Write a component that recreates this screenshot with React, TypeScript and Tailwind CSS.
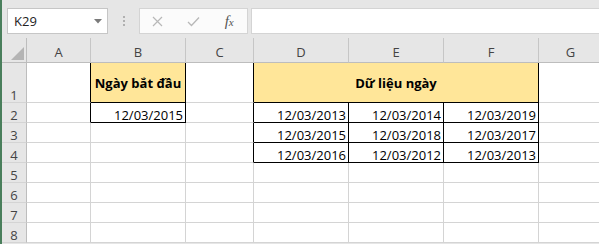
import React from "react";

const font = { fontFamily: '"Open Sans", "Noto Sans", sans-serif' };

const letters = ["A", "B", "C", "D", "E", "F", "G"];

const dataRows: (string | null)[][] = [
  [null, "12/03/2015", null, "12/03/2013", "12/03/2014", "12/03/2019", null],
  [null, null, null, "12/03/2015", "12/03/2018", "12/03/2017", null],
  [null, null, null, "12/03/2016", "12/03/2012", "12/03/2013", null],
  [null, null, null, null, null, null, null],
  [null, null, null, null, null, null, null],
  [null, null, null, null, null, null, null],
  [null, null, null, null, null, null, null],
];

function cellClass(row: number, col: number): string {
  const inBlock = col >= 3 && col <= 5 && row <= 4;
  const inB = col === 1 && row === 2;
  const rightBlack = inBlock || (col === 2 && row <= 4) || (col === 0 && row === 2) || inB;
  const bottomBlack = inBlock || inB;
  const r = rightBlack ? "border-r-black" : "border-r-[#d4d4d4]";
  const b = bottomBlack ? "border-b-black" : "border-b-[#d4d4d4]";
  return `flex items-end justify-end pr-[2px] border-r border-b bg-white text-[13px] leading-[14px] text-black ${r} ${b}`;
}

export default function App() {
  return (
    <div
      className="w-[599px] h-[244px] overflow-hidden bg-[#e6e6e6] border-l-2 border-l-[#4a7f5c] flex flex-col"
      style={font}
    >
      {/* Formula bar */}
      <div className="h-[38px] shrink-0 flex items-start pt-[8px] bg-[#e6e6e6]">
        <div className="ml-[5px] w-[101px] h-[26px] bg-white border border-[#c6c6c6] flex items-center justify-between pl-[6px] pr-[5px]">
          <span className="text-[13px] text-[#222] leading-none">K29</span>
          <svg width="8" height="5" viewBox="0 0 8 5">
            <polygon points="0,0 8,0 4,4.5" fill="#7a7a7a" />
          </svg>
        </div>
        <div className="w-[31px] h-[26px] flex flex-col items-center justify-center gap-[2px]">
          <div className="w-[2px] h-[2px] bg-[#b0b0b0]" />
          <div className="w-[2px] h-[2px] bg-[#b0b0b0]" />
          <div className="w-[2px] h-[2px] bg-[#b0b0b0]" />
        </div>
        <div className="w-[109px] h-[26px] bg-[#fbfbfb] border border-[#d4d4d4] flex items-center">
          <div className="w-[36px] flex justify-center">
            <svg width="11" height="11" viewBox="0 0 11 11">
              <path d="M1 1 L10 10 M10 1 L1 10" stroke="#b8b8b8" strokeWidth="1.2" />
            </svg>
          </div>
          <div className="w-[36px] flex justify-center">
            <svg width="13" height="11" viewBox="0 0 13 11">
              <path d="M1 6 L4.5 9.5 L12 1.5" stroke="#b8b8b8" strokeWidth="1.3" fill="none" />
            </svg>
          </div>
          <div className="w-[36px] flex justify-center">
            <span
              className="italic text-[15px] leading-none text-[#555]"
              style={{ fontFamily: '"Liberation Serif", "DejaVu Serif", serif' }}
            >
              f<span className="text-[11px]">x</span>
            </span>
          </div>
        </div>
        <div className="ml-[3px] flex-1 h-[26px] bg-white border border-[#d4d4d4] border-r-0" />
      </div>

      {/* Grid */}
      <div className="grid grid-cols-[25px_64px_95px_68px_95px_95px_95px_64px] grid-rows-[25px_40px_repeat(7,20px)]">
        <div className="relative bg-[#e6e6e6] border-r border-b border-r-[#bdbdbd] border-b-[#bdbdbd]">
          <svg className="absolute right-[2px] bottom-[2px]" width="13" height="13" viewBox="0 0 13 13">
            <polygon points="13,0 13,13 0,13" fill="#b4b4b4" />
          </svg>
        </div>
        {letters.map((l) => (
          <div
            key={l}
            className="flex items-end justify-center pb-[3px] bg-[#e6e6e6] border-r border-b border-r-[#c6c6c6] border-b-[#bdbdbd] text-[13px] leading-[14px] text-[#444]"
          >
            {l}
          </div>
        ))}

        {/* Row 1 */}
        <div className="flex items-end justify-center bg-[#e6e6e6] border-r border-b border-r-[#bdbdbd] border-b-[#d4d4d4] text-[13px] leading-[14px] text-[#444]">
          1
        </div>
        <div className="bg-white border-r border-b border-r-black border-b-[#d4d4d4]" />
        <div className="flex items-center justify-center bg-[#ffe699] border-r border-b border-r-black border-b-black text-[13px] leading-[14px] font-bold text-black">
          Ngày bắt đầu
        </div>
        <div className="bg-white border-r border-b border-r-black border-b-[#d4d4d4]" />
        <div className="col-span-3 flex items-center justify-center bg-[#ffe699] border-r border-b border-r-black border-b-black text-[13px] leading-[14px] font-bold text-black">
          Dữ liệu ngày
        </div>
        <div className="bg-white border-r border-b border-r-[#d4d4d4] border-b-[#d4d4d4]" />

        {dataRows.map((cells, i) => {
          const row = i + 2;
          return (
            <React.Fragment key={row}>
              <div className="flex items-end justify-center bg-[#e6e6e6] border-r border-b border-r-[#bdbdbd] border-b-[#d4d4d4] text-[13px] leading-[14px] text-[#444]">
                {row}
              </div>
              {cells.map((c, col) => (
                <div key={col} className={cellClass(row, col)}>
                  {c}
                </div>
              ))}
            </React.Fragment>
          );
        })}
      </div>
    </div>
  );
}
